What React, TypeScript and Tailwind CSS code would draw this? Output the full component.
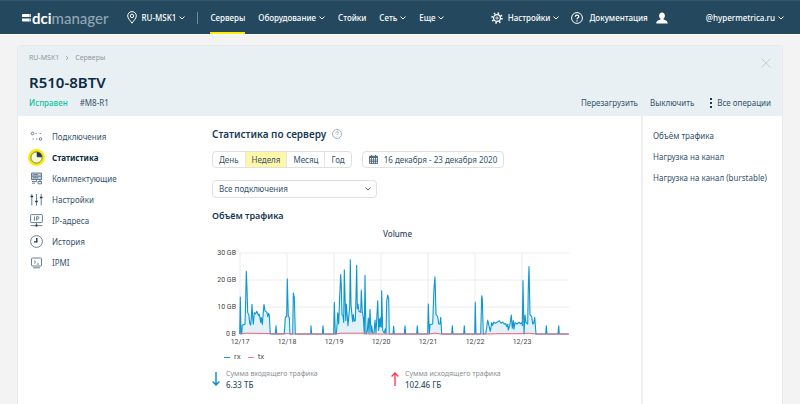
import type { ReactNode } from 'react';
import clsx from 'clsx';

type Point = [number, number];

/* Uma unidade de X equivale a ~10 minutos; Y em GB */
const UNITS_PER_DAY = 141;
const PLOT = { left: 28, top: 24, width: 329, height: 81, maxGb: 30 };

const RX: Point[] = [
  [-1, 0], [1, 13.7], [3, 0], [5, 0], [7, 3.3], [15, 3.6], [17, 13], [19, 23.2], [21, 17], [23, 8], [27, 6.8],
  [29, 4], [32, 3.3], [34, 6], [36, 11], [38, 6], [40, 3.6], [43, 7.9], [47, 7.4], [50, 8.4], [56, 6.8], [58, 7.3],
  [60, 5.9], [62, 4.3], [64, 6.2], [67, 3.5], [70, 8], [72, 11], [75, 8.6], [81, 8], [83, 6.4], [86, 7.6], [88, 7],
  [91, 0], [106, 0], [108, 3], [110, 0], [133, 0], [136, 6.2], [140, 6.6], [142, 20.4], [145, 6.6], [148, 6.2],
  [150, 0], [158, 0], [160, 15.2], [163, 13.6], [166, 0], [212, 0], [213, 3], [215, 0], [247, 0], [249, 3],
  [251, 0], [281, 0], [283, 11.7], [286, 0], [289, 0], [291, 3.2], [293, 7.9], [296, 3.7], [299, 14], [302, 22],
  [304, 18], [306, 7.2], [309, 6.8], [311, 4.3], [313, 23.8], [317, 5], [319, 11.1], [322, 6.2], [324, 3.1],
  [327, 7.4], [329, 10], [331, 27.5], [333, 11], [335, 8], [338, 4.6], [340, 7.2], [343, 4.7], [346, 5], [348, 14],
  [350, 25.4], [352, 9.3], [354, 11.1], [357, 8.4], [362, 8], [364, 16.3], [367, 8], [370, 6.2], [373, 0],
  [375, 21.7], [378, 0], [382, 1], [385, 5.9], [387, 0.3], [390, 9.1], [393, 0.3], [395, 3], [398, 0.3], [402, 0.3],
  [405, 5.2], [408, 0.3], [413, 12.3], [416, 1.3], [418, 5.6], [420, 2.7], [422, 6], [424, 2.5], [425, 16],
  [428, 1.2], [433, 0.3], [436, 1.9], [438, 0], [440, 12.3], [443, 14.4], [446, 13], [448, 0], [459, 0], [461, 2.9],
  [463, 0], [493, 0], [495, 3], [497, 0], [530, 0], [532, 3], [534, 0], [563, 0], [565, 11.1], [568, 0], [570, 3.5],
  [578, 3.7], [582, 17], [585, 21.2], [588, 7.2], [593, 6.5], [596, 3.7], [600, 3.7], [602, 6.2], [605, 0],
  [635, 0], [637, 3], [639, 0], [671, 0], [673, 3], [675, 0], [704, 0], [706, 11.7], [708, 0], [722, 0], [725, 14.2],
  [727, 13], [730, 0], [737, 0.2], [740, 2.5], [743, 5.2], [747, 3], [751, 1], [755, 4.2], [758, 3.2], [761, 4.4],
  [766, 4], [772, 4.4], [778, 4.9], [783, 4], [788, 4.4], [793, 3.6], [797, 3.9], [800, 2.7], [803, 3.6],
  [805, 1.5], [810, 3.5], [814, 7], [817, 2.2], [820, 5], [822, 1.8], [825, 4.2], [831, 3.7], [837, 4.4],
  [841, 3.8], [845, 4.2], [847, 3.1], [849, 19.8], [852, 0], [855, 7], [858, 4.3], [863, 3.7], [865, 17], [867, 25],
  [870, 7.2], [875, 6.4], [878, 3.7], [881, 4], [884, 6.2], [888, 0], [917, 0], [919, 3], [921, 0], [954, 0],
  [956, 3], [958, 0], [986, 0],
];

const TX: Point[] = [
  [0, 0.1], [18, 0.3], [90, 0.2], [110, 0], [142, 0.2], [160, 0], [285, 0], [302, 0.3], [370, 0.3], [390, 0],
  [565, 0], [585, 0.3], [605, 0], [740, 0], [780, 0.1], [840, 0.1], [867, 0.3], [888, 0], [986, 0],
];

const DAYS = ['12/17', '12/18', '12/19', '12/20', '12/21', '12/22', '12/23'];
const LEVELS = [
  { gb: 30, label: '30 GB' },
  { gb: 20, label: '20 GB' },
  { gb: 10, label: '10 GB' },
  { gb: 0, label: '0 B' },
];

const plotX = (units: number) => PLOT.left + units / 3;
const plotY = (gb: number) => PLOT.top + PLOT.height * (1 - gb / PLOT.maxGb);
const toPoints = (data: Point[]) => data.map(([x, gb]) => `${plotX(x).toFixed(1)},${plotY(gb).toFixed(1)}`).join(' ');

function Chevron({ className = 'text-white' }: { className?: string }) {
  return (
    <svg viewBox="0 0 6 4" className={clsx('h-1 w-1.5 flex-none', className)} fill="none" stroke="currentColor">
      <path d="M.5.6 3 3 5.5.6" />
    </svg>
  );
}

function Logo() {
  return (
    <a href="#" aria-label="dcimanager" className="flex items-center gap-px font-['Lato',sans-serif] text-[15px] leading-4">
      <svg viewBox="0 0 9 8" className="mt-px h-2 w-[9px]" fill="#fff">
        <path d="M1 0h6.500v3H0V1a1 1 0 0 1 1-1ZM0 4.600h7.500v3H1a1 1 0 0 1-1-1Z" />
        <path d="M7.500 0H9v3H7.500ZM7.500 4.600H9v3H7.500Z" opacity=".75" />
      </svg>
      <span>
        <span className="font-bold text-white">dci</span>
        <span className="text-[#8fa6b5]">manager</span>
      </span>
    </a>
  );
}

function NavItem({ children, active, menu }: { children: ReactNode; active?: boolean; menu?: boolean }) {
  return (
    <a
      href="#"
      className={clsx('flex h-full items-center gap-[3px] border-y-2 border-t-transparent', active ? 'border-b-[#ffea00]' : 'border-b-transparent')}
    >
      {children}
      {menu && <Chevron />}
    </a>
  );
}

function Header() {
  return (
    <header className="flex h-[35px] flex-none items-center border-t border-b border-t-[#34566c] border-b-white bg-[#24485e] pr-4 pl-[22px] font-medium whitespace-nowrap text-white">
      <Logo />
      <button className="ml-[18px] flex items-center gap-[3px]">
        <svg viewBox="0 0 10 13" className="mr-0.5 h-[13px] w-2.5" fill="none" stroke="#fff">
          <path d="M5 12.2C3.6 9.8.7 7.6.7 4.9a4.3 4.3 0 0 1 8.6 0C9.3 7.6 6.4 9.8 5 12.2Z" />
          <circle cx="5" cy="4.900" r="1.700" />
        </svg>
        RU-MSK1
        <Chevron />
      </button>
      <span className="mx-3 h-3 w-px bg-[#708b9b]" />
      <nav className="flex h-full items-center gap-[13px]">
        <NavItem active>Серверы</NavItem>
        <NavItem menu>Оборудование</NavItem>
        <NavItem>Стойки</NavItem>
        <NavItem menu>Сеть</NavItem>
        <NavItem menu>Еще</NavItem>
      </nav>
      <div className="ml-auto flex items-center">
        <button className="mr-3 flex items-center gap-[3px]">
          <svg viewBox="0 0 12 12" className="mr-0.5 size-3" fill="none" stroke="#fff">
            <circle cx="6" cy="6" r="3.400" strokeWidth="1.300" />
            <circle cx="6" cy="6" r="1.100" strokeWidth=".8" />
            <circle cx="6" cy="6" r="4.900" strokeWidth="1.700" strokeDasharray="1.5 2.348" />
          </svg>
          Настройки
          <Chevron />
        </button>
        <a href="#" className="mr-2 flex items-center gap-1.5">
          <svg viewBox="0 0 12 12" className="size-3" fill="none" stroke="#fff">
            <circle cx="6" cy="6" r="5.400" />
            <path d="M4.3 4.8c0-2.4 3.5-2.2 3.5-.2C7.8 5.9 6 5.7 6 7.2M6 8.2v1.2" strokeWidth="1.200" />
          </svg>
          Документация
        </a>
        <button aria-label="Профиль">
          <svg viewBox="0 0 12 12" className="size-3" fill="#fff">
            <path d="M6 .4c1.800 0 2.900 1.300 2.900 3.200 0 1.400-.6 2.600-1.400 3.200v.8c1.800.5 4.200 1.200 4.200 3.900H.3c0-2.700 2.400-3.400 4.200-3.900v-.8c-.8-.6-1.400-1.800-1.400-3.200C3.100 1.700 4.200.4 6 .4Z" />
          </svg>
        </button>
      </div>
      <button className="ml-[38px] flex items-center gap-[3px]">
        @hypermetrica.ru
        <Chevron />
      </button>
    </header>
  );
}

const MENU: { label: string; active?: boolean; icon: ReactNode }[] = [
  {
    label: 'Подключения',
    icon: (
      <>
        <circle cx="2.500" cy="3.500" r="1.300" />
        <path d="M5.500 3.500h1.200M9.600 3.500h1.200M2.600 9h1.200M6.200 9h1.200" />
        <circle cx="10.500" cy="9" r="1.300" />
      </>
    ),
  },
  {
    label: 'Статистика',
    active: true,
    icon: (
      <>
        <circle cx="6.500" cy="6.500" r="5.600" fill="#fffbd0" />
        <path d="M7.200 5.800V1.300a5 5 0 0 1 4.500 4.500Z" fill="#173a54" stroke="#173a54" />
      </>
    ),
  },
  {
    label: 'Комплектующие',
    icon: (
      <>
        <path d="M1.500 1h10v6.500h-10zM1.500 4.200h10" fill="#c3ced6" />
        <path d="M3 2.700h5M3 5.800h5M2 9.500h4.500V7.500M2 11.200h3M8 9.500h3.500v2.300H8zM10 7.500v2" />
      </>
    ),
  },
  {
    label: 'Настройки',
    icon: (
      <>
        <path d="M1.800 1v11.500M6.500 1v11.500M11.200 1v11.500" />
        <path d="M.5 3.500h2.600M5.200 8.500h2.600M9.900 4.500h2.600" stroke="#173a54" strokeWidth="1.500" />
      </>
    ),
  },
  {
    label: 'IP-адреса',
    icon: (
      <>
        <rect x=".6" y=".6" width="11.800" height="8" rx="1" />
        <path d="M4.400 2.500v4.200M6.700 6.700V2.600h1.100a1.100 1.100 0 0 1 0 2.300H6.700M6.500 8.600v3M.6 11.600h11.800" />
        <circle cx="6.500" cy="11.500" r="1" fill="#173a54" />
      </>
    ),
  },
  {
    label: 'История',
    icon: (
      <>
        <circle cx="6.500" cy="6.500" r="5.900" />
        <path d="M6.800 3v3.900H4" stroke="#173a54" strokeWidth="1.400" />
      </>
    ),
  },
  {
    label: 'IPMI',
    icon: (
      <>
        <rect x="1.500" y="2" width="10" height="8" rx="1" />
        <path d="m4 4.500 1.700 1.600L4 7.500M6.800 8H9M3 11.800h7" />
      </>
    ),
  },
];

function Sidebar() {
  return (
    <nav className="w-[194px] flex-none pt-2.5 pl-2.5">
      {MENU.map(({ label, active, icon }) => (
        <a key={label} href="#" className="flex h-[21px] items-center gap-[7px]">
          <span className={clsx('flex size-[17px] items-center justify-center rounded-full', active && 'bg-[#ffea00]')}>
            <svg viewBox="0 0 13 13" className="size-[13px]" fill="none" stroke="#58738a" strokeWidth=".9">
              {icon}
            </svg>
          </span>
          <span className={clsx(active && 'font-bold text-[#0d2c43]')}>{label}</span>
        </a>
      ))}
    </nav>
  );
}

function VolumeChart() {
  const base = plotY(0);
  return (
    <figure className="font-['Roboto',sans-serif]">
      <svg viewBox="0 0 358 117" className="block h-[117px] w-[358px]" role="img" aria-label="Volume">
        <text x="171" y="8" fontSize="8" fill="#33475b" className="font-['Noto_Sans',sans-serif] font-medium">
          Volume
        </text>
        {LEVELS.map(({ gb, label }) => (
          <g key={label}>
            <path d={`M${PLOT.left} ${plotY(gb)}h${PLOT.width}`} stroke="#ececec" />
            <text x="24" y={plotY(gb) + 2} fontSize="7" textAnchor="end" fill="#444">
              {label}
            </text>
          </g>
        ))}
        {DAYS.map((day, i) => (
          <g key={day}>
            <path d={`M${plotX(i * UNITS_PER_DAY)} ${PLOT.top}V${base}`} stroke="#ececec" />
            <text x={plotX(i * UNITS_PER_DAY)} y={base + 10} fontSize="7" textAnchor="middle" fill="#444">
              {day}
            </text>
          </g>
        ))}
        <polygon points={`${PLOT.left},${base} ${toPoints(RX)}`} fill="#e0f1f9" />
        <polyline points={toPoints(RX)} fill="none" stroke="#0d97cf" strokeWidth="1.100" strokeLinejoin="round" />
        <polyline points={toPoints(TX)} fill="none" stroke="#f2647b" />
      </svg>
      <figcaption className="flex gap-[7px] pt-[5px] pl-3 text-[8px] leading-3 text-[#545454]">
        <span className="flex items-center gap-1">
          <i className="h-px w-1.5 bg-[#0d97cf]" />
          rx
        </span>
        <span className="flex items-center gap-1">
          <i className="h-px w-1.5 bg-[#f77f92]" />
          tx
        </span>
      </figcaption>
    </figure>
  );
}

function Total({ label, value, up }: { label: string; value: string; up?: boolean }) {
  return (
    <div className="flex w-[179px] items-center gap-1.5">
      <svg viewBox="0 0 8 14" className="h-3.5 w-2" fill="none" stroke={up ? '#ff3b5c' : '#0a87c9'} strokeWidth="1.400">
        <path d={up ? 'M4 14V1M.6 4.6 4 1l3.4 3.6' : 'M4 0v13M.6 9.4 4 13l3.4-3.6'} />
      </svg>
      <dl className="leading-[11px]">
        <dt className="text-[7px] text-[#8b8f93]">{label}</dt>
        <dd className="font-medium">{value}</dd>
      </dl>
    </div>
  );
}

const PERIODS = ['День', 'Неделя', 'Месяц', 'Год'];

function Statistics() {
  return (
    <main className="min-w-0 flex-1 pt-2.5">
      <h2 className="flex items-center gap-1.5 text-[10px] leading-4 font-semibold text-[#173a54]">
        Статистика по серверу
        <svg viewBox="0 0 10 10" className="size-2.5" fill="none" stroke="#8d9aa5" strokeWidth=".8">
          <circle cx="5" cy="5" r="4.500" />
          <path d="M3.700 4c0-1.800 2.700-1.600 2.700-.1C6.400 4.900 5 4.800 5 6M5 6.800v.8" />
        </svg>
      </h2>

      <div className="mt-[9px] flex gap-2.5">
        <div className="flex h-[17px] divide-x divide-[#e6e6e6] rounded-sm border border-[#e0e0e0]">
          {PERIODS.map((period) => (
            <button key={period} className={clsx('px-1.5', period === 'Неделя' && 'bg-[#fff7a8]')}>
              {period}
            </button>
          ))}
        </div>
        <button className="flex h-[17px] items-center gap-1.5 rounded-sm border border-[#e0e0e0] px-1.5">
          <svg viewBox="0 0 9 9" className="size-[9px]" fill="none" stroke="#3f5c72" strokeWidth=".8">
            <path d="M.5 1.200h8v7.300h-8zM2.500 0v2M6.500 0v2M.5 5h8M.5 6.700h8M2.500 3v5.500M4.500 3v5.500M6.500 3v5.500" />
            <path d="M.5 2.200h8" strokeWidth="1.500" />
          </svg>
          16 декабря - 23 декабря 2020
        </button>
      </div>

      <div className="relative mt-3 w-[165px]">
        <select
          aria-label="Подключение"
          className="block h-[18px] w-full appearance-none rounded-sm border border-[#e0e0e0] bg-white px-1.5"
        >
          <option>Все подключения</option>
        </select>
        <span className="pointer-events-none absolute inset-y-0 right-1.5 flex items-center">
          <Chevron className="text-[#4b6579]" />
        </span>
      </div>

      <h3 className="mt-3 text-[9px] leading-3 font-semibold text-[#173a54]">Объём трафика</h3>
      <div className="mt-[7px]">
        <VolumeChart />
      </div>
      <div className="mt-[5px] flex">
        <Total label="Сумма входящего трафика" value="6.33 ТБ" />
        <Total label="Сумма исходящего трафика" value="102.46 ГБ" up />
      </div>
    </main>
  );
}

export default function App() {
  return (
    <div className="flex min-h-screen flex-col bg-[#f3f3f3] font-['Noto_Sans',sans-serif] text-[8px] leading-3 text-[#34536b]">
      <Header />
      <div className="mx-[17px] mt-2.5 flex flex-1 flex-col rounded-t-sm border-x border-t border-[#e6e8e9] bg-white">
        <div className="flex justify-between rounded-t-sm bg-[#e8f0f4] px-[11px] pt-1.5 pb-[7px]">
          <div>
            <div className="flex items-center gap-1.5 text-[7px] text-[#8d9aa2]">
              <a href="#">RU-MSK1</a>
              <svg viewBox="0 0 4 6" className="h-1.5 w-1" fill="none" stroke="currentColor" strokeWidth=".8">
                <path d="m1 1 2 2-2 2" />
              </svg>
              <a href="#">Серверы</a>
            </div>
            <h1 className="mt-2 text-[15px] leading-5 font-semibold text-[#0d2c43]">R510-8BTV</h1>
            <div className="mt-[5px] flex gap-3">
              <span className="font-medium text-[#0fc2a0]">Исправен</span>
              <span>#M8-R1</span>
            </div>
          </div>
          <div className="flex flex-col items-end justify-between">
            <button aria-label="Закрыть" className="mt-1.5">
              <svg viewBox="0 0 10 10" className="size-2.5" fill="none" stroke="#c9cfd2">
                <path d="m.5.5 9 9M9.500.5l-9 9" />
              </svg>
            </button>
            <div className="flex gap-3">
              <button>Перезагрузить</button>
              <button>Выключить</button>
              <button className="ml-1 flex items-center gap-[5px]">
                <svg viewBox="0 0 2 10" className="h-2.5 w-0.5" fill="#173a54">
                  <path d="M0 0h2v2H0zM0 4h2v2H0zM0 8h2v2H0z" />
                </svg>
                Все операции
              </button>
            </div>
          </div>
        </div>

        <div className="flex flex-1">
          <Sidebar />
          <Statistics />
          <aside className="flex w-[141px] flex-none flex-col border-l-2 border-[#eeeeee] pt-[9px] pl-2.5 leading-[21px] whitespace-nowrap">
            <a href="#">Объём трафика</a>
            <a href="#">Нагрузка на канал</a>
            <a href="#">Нагрузка на канал (burstable)</a>
          </aside>
        </div>
      </div>
    </div>
  );
}
